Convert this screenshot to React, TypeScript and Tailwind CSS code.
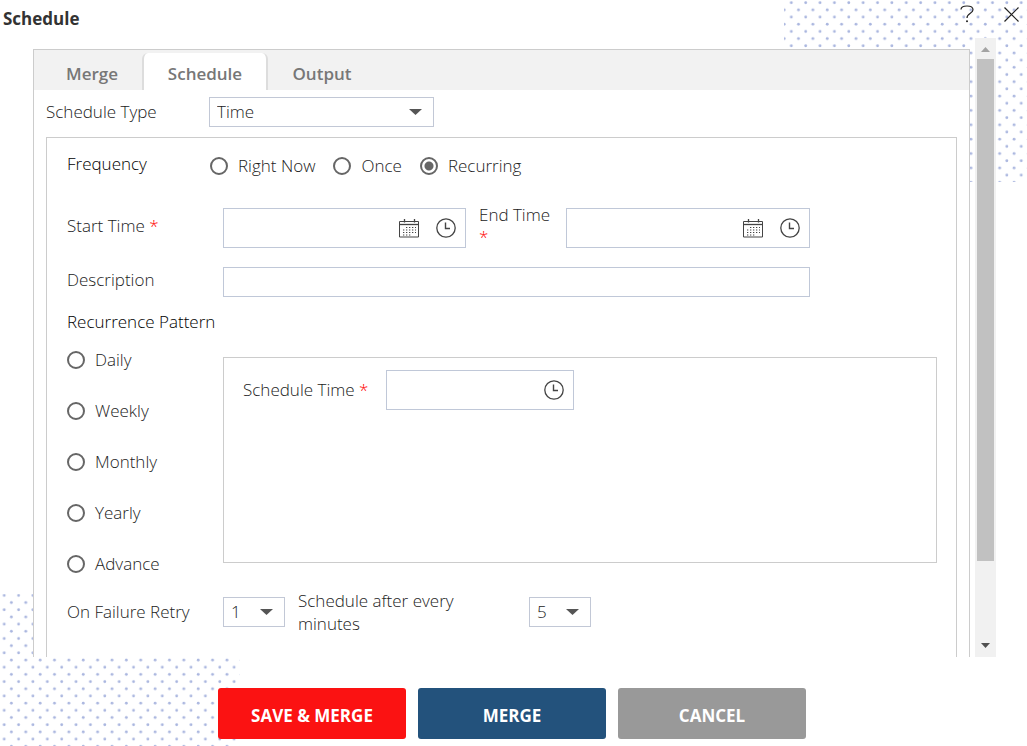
import React, { useState } from 'react';

const FREQUENCIES = ['Right Now', 'Once', 'Recurring'];
const PATTERNS = ['Daily', 'Weekly', 'Monthly', 'Yearly', 'Advance'];

interface DotsProps {
    id: string;
    x: number;
    y: number;
    className: string;
}

// Staggered dot texture used in the dialog corners
const Dots: React.FC<DotsProps> = ({ id, x, y, className }) => (
    <svg className={`absolute pointer-events-none ${className}`} aria-hidden="true">
        <defs>
            <pattern id={id} x={x} y={y} width="14.37" height="14.37" patternUnits="userSpaceOnUse">
                <circle cx="3.6" cy="3.6" r="1.4" fill="#aab6df" />
                <circle cx="10.8" cy="10.8" r="1.4" fill="#aab6df" />
            </pattern>
        </defs>
        <rect width="100%" height="100%" fill={`url(#${id})`} />
    </svg>
);

const CalendarIcon: React.FC = () => (
    <svg width="20" height="19" viewBox="0 0 20 19" fill="none" stroke="#444">
        <path d="M.5 2.5h19v15.5H.5z" />
        <path d="M0 5.5h20" strokeWidth="1.3" />
        <path d="M5.500 0v3.5M15.500 0v3.5" strokeWidth="1.3" />
        <path d="M7 8.500h10M4 11h13M4 13.500h13M4 16h9" strokeWidth="1.2" strokeDasharray="1.3 1.7" />
    </svg>
);

const ClockIcon: React.FC = () => (
    <svg width="20" height="20" viewBox="0 0 20 20" fill="none" stroke="#444">
        <circle cx="10" cy="10" r="9.2" strokeWidth="1.3" />
        <path d="M9.500 4.500v6H14" strokeWidth="1.4" />
    </svg>
);

interface RadioProps {
    name: string;
    label: string;
    checked: boolean;
    onSelect: (label: string) => void;
}

const Radio: React.FC<RadioProps> = ({ name, label, checked, onSelect }) => (
    <label className="flex items-center h-6 gap-[10px]">
        <input
            type="radio"
            name={name}
            checked={checked}
            onChange={() => onSelect(label)}
            className="appearance-none shrink-0 size-[18px] rounded-full border-2 border-[#666] bg-white checked:bg-[radial-gradient(circle,#666_4px,white_5px)]"
        />
        <span>{label}</span>
    </label>
);

interface SelectProps {
    id: string;
    options: string[];
    className: string;
}

const Select: React.FC<SelectProps> = ({ id, options, className }) => (
    <div className={`relative h-[30px] shrink-0 ${className}`}>
        <select
            id={id}
            className="appearance-none block w-full h-full pl-[7px] border border-[#c2c8d6] bg-white text-[#222]"
        >
            {options.map((option) => (
                <option key={option}>{option}</option>
            ))}
        </select>
        <svg className="absolute right-3 top-3 pointer-events-none" width="13" height="6" viewBox="0 0 13 6">
            <path d="M0 0h13L6.500 6z" fill="#555" />
        </svg>
    </div>
);

interface TimeFieldProps {
    id: string;
    withDate?: boolean;
    className: string;
}

const TimeField: React.FC<TimeFieldProps> = ({ id, withDate, className }) => (
    <div className={`flex items-center shrink-0 h-10 pr-[9px] gap-[17px] border border-[#c0c8d8] bg-white ${className}`}>
        <input id={id} type="text" className="flex-1 min-w-0 h-full px-2 outline-none" />
        {withDate && (
            <button type="button" aria-label="Pick date"><CalendarIcon /></button>
        )}
        <button type="button" aria-label="Pick time"><ClockIcon /></button>
    </div>
);

const Required: React.FC = () => <span className="text-[#f00]">*</span>;

const App: React.FC = () => {
    const [tab, setTab] = useState('Schedule');
    const [frequency, setFrequency] = useState('Recurring');
    const [pattern, setPattern] = useState('');

    const tabClass = (name: string) =>
        name === tab
            ? 'bg-white rounded-t-md border-x-2 border-[#ddd]'
            : '';

    return (
        <div className="relative isolate flex flex-col h-screen overflow-hidden bg-white font-['Open_Sans','Noto_Sans',sans-serif] font-light text-[17px] leading-6 text-[#222]">
            <Dots id="dots-top" x={3.7} y={-0.9} className="-z-10 top-0 right-0 w-[243px] h-[182px]" />
            <Dots id="dots-bottom" x={0.6} y={-2.2} className="-z-10 bottom-0 left-0 w-[240px] h-[152px]" />

            <header className="flex items-center justify-between h-[38px] shrink-0 pl-[3px] pr-2">
                <h1 className="font-bold text-[#333]">Schedule</h1>
                <div className="flex items-center gap-[30px] pb-[10px]">
                    <button type="button" aria-label="Help">
                        <svg width="14" height="18" viewBox="0 0 14 18" fill="none" stroke="#222">
                            <path d="M1 4.500C1 2 3.500 1 7 1s6 1 6 3.800C13 8.500 7 8 7 13" strokeWidth="1.2" />
                            <circle cx="7" cy="16.3" r="1" fill="#222" stroke="none" />
                        </svg>
                    </button>
                    <button type="button" aria-label="Close">
                        <svg width="15" height="15" viewBox="0 0 15 15" fill="none" stroke="#222" strokeWidth="1.2">
                            <path d="M.5.5l14 14M14.500.5l-14 14" />
                        </svg>
                    </button>
                </div>
            </header>

            <div className="flex flex-1 min-h-0 pl-[33px] pr-[31px]">
                <div className="flex-1 min-w-0 pt-[11px] pr-[5px] overflow-y-auto [scrollbar-width:none]">
                    <main className="border border-[#ccc] bg-white pb-10">
                        <nav className="flex items-end h-10 pl-2 bg-[#f2f2f2] font-semibold text-[#777]">
                            <button type="button" onClick={() => setTab('Merge')} className={`w-[100px] h-[37px] pt-1 ${tabClass('Merge')}`}>Merge</button>
                            <button type="button" onClick={() => setTab('Schedule')} className={`w-[126px] h-[37px] pt-1 ${tabClass('Schedule')}`}>Schedule</button>
                            <button type="button" onClick={() => setTab('Output')} className={`w-[108px] h-[37px] pt-1 ${tabClass('Output')}`}>Output</button>
                        </nav>

                        <div className="px-3 pt-[7px]">
                            <div className="flex items-center">
                                <label htmlFor="schedule-type" className="w-[163px]">Schedule Type</label>
                                <Select id="schedule-type" options={['Time', 'File']} className="w-[225px]" />
                            </div>

                            <section className="mt-[10px] pl-5 pr-[19px] pt-4 pb-40 border border-[#ccc]">
                                <div className="flex">
                                    <span className="w-[143px] leading-5 text-black">Frequency</span>
                                    <div className="flex gap-[18px]">
                                        {FREQUENCIES.map((item) => (
                                            <Radio key={item} name="frequency" label={item} checked={item === frequency} onSelect={setFrequency} />
                                        ))}
                                    </div>
                                </div>

                                <div className="flex items-center h-[46px] mt-[27px]">
                                    <label htmlFor="start-time" className="w-[156px] pb-1">Start Time <Required /></label>
                                    <TimeField id="start-time" withDate className="w-[243px]" />
                                    <label htmlFor="end-time" className="w-[100px] pl-[13px] pb-1 leading-[22px]">End Time<br /><Required /></label>
                                    <TimeField id="end-time" withDate className="w-[244px]" />
                                </div>

                                <div className="flex items-center mt-4">
                                    <label htmlFor="description" className="w-[156px] pb-1">Description</label>
                                    <input id="description" type="text" className="w-[587px] h-[30px] px-2 border border-[#c0c8d8] outline-none" />
                                </div>

                                <h2 className="mt-[13px] text-black">Recurrence Pattern</h2>

                                <div className="flex mt-[14px]">
                                    <div className="flex flex-col gap-[27px] w-[156px] shrink-0">
                                        {PATTERNS.map((item) => (
                                            <Radio key={item} name="pattern" label={item} checked={item === pattern} onSelect={setPattern} />
                                        ))}
                                    </div>
                                    <div className="flex-1 flex items-start mt-[9px] mb-[13px] pl-[19px] pt-3 border border-[#ccc]">
                                        <label htmlFor="schedule-time" className="w-[143px] leading-10">Schedule Time <Required /></label>
                                        <TimeField id="schedule-time" className="w-[188px]" />
                                    </div>
                                </div>

                                <div className="flex items-center mt-[13px]">
                                    <label htmlFor="retry" className="w-[156px]">On Failure Retry</label>
                                    <Select id="retry" options={['1', '2', '3']} className="w-[62px]" />
                                    <label htmlFor="interval" className="w-[244px] pl-[13px] pr-10 leading-[23px]">Schedule after every minutes</label>
                                    <Select id="interval" options={['5', '10', '15']} className="w-[62px]" />
                                </div>
                            </section>
                        </div>
                    </main>
                </div>

                <div className="flex flex-col items-center w-[21px] shrink-0 bg-[#f1f1f1]" aria-hidden="true">
                    <svg className="shrink-0" width="21" height="21" viewBox="0 0 21 21">
                        <path d="M6 14h9l-4.500-5z" fill="#a3a3a3" />
                    </svg>
                    <div className="w-[17px] grow-[87] bg-[#c1c1c1]" />
                    <div className="grow-[13]" />
                    <svg className="shrink-0" width="21" height="21" viewBox="0 0 21 21">
                        <path d="M6 7h9l-4.500 5z" fill="#505050" />
                    </svg>
                </div>
            </div>

            <footer className="flex justify-center gap-3 shrink-0 pt-[31px] pb-[7px] pr-[3px] font-bold text-white">
                <button type="button" className="w-[188px] h-[51px] pt-1 rounded-[3px] bg-[#fb1212]">SAVE &amp; MERGE</button>
                <button type="button" className="w-[188px] h-[51px] pt-1 rounded-[3px] bg-[#23527c]">MERGE</button>
                <button type="button" className="w-[188px] h-[51px] pt-1 rounded-[3px] bg-[#999]">CANCEL</button>
            </footer>
        </div>
    );
};

export default App;
